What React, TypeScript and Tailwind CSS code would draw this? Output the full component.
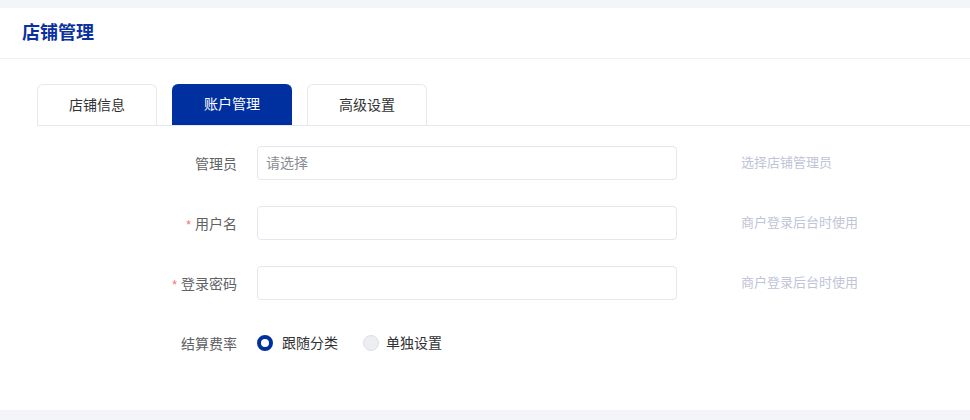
import React from 'react';

const font = { fontFamily: '"Liberation Sans", "Noto Sans CJK SC", sans-serif' };

function Row({ label, required, children, hint }: { label: string; required?: boolean; children: React.ReactNode; hint?: string }) {
  return (
    <div className="flex items-center h-[34px] mb-[26px]">
      <div className="w-[200px] text-right text-[14px] text-[#606266] pt-[3px]">
        {required && <span className="text-[#f56c6c] mr-1 text-[12px]">*</span>}
        {label}
      </div>
      <div className="ml-[20px] w-[420px]">{children}</div>
      {hint && <div className="ml-[64px] text-[13px] text-[#c0c4d6]">{hint}</div>}
    </div>
  );
}

export default function App() {
  return (
    <div className="w-[970px] h-[420px] bg-[#f4f5f9] pt-2" style={font}>
      <div className="bg-white h-[402px]">
        {/* header */}
        <div className="h-[51px] border-b border-[#eef0f4] flex items-center pl-[22px]">
          <h1 className="text-[18px] font-bold text-[#0a2fa0] mt-[1px]">店铺管理</h1>
        </div>

        {/* tabs */}
        <div className="pl-[37px] pt-[25px]">
          <div className="flex gap-[15px] border-b border-[#e6e8ee] h-[42px]">
            {['店铺信息', '账户管理', '高级设置'].map((t, i) => (
              <div
                key={t}
                className={
                  i === 1
                    ? 'w-[120px] h-[41px] rounded-t-md bg-[#0030a0] text-white text-[14px] flex items-center justify-center'
                    : 'w-[120px] h-[41px] rounded-t-md border border-b-0 border-[#e6e8ee] text-[#303133] text-[14px] flex items-center justify-center'
                }
              >
                {t}
              </div>
            ))}
          </div>

          {/* form */}
          <div className="pt-[20px]">
            <Row label="管理员" hint="选择店铺管理员">
              <div className="h-[34px] border border-[#e4e7ed] rounded flex items-center px-[8px] text-[14px] text-[#8a8d93]">请选择</div>
            </Row>
            <Row label="用户名" required hint="商户登录后台时使用">
              <div className="h-[34px] border border-[#e4e7ed] rounded" />
            </Row>
            <Row label="登录密码" required hint="商户登录后台时使用">
              <div className="h-[34px] border border-[#e4e7ed] rounded" />
            </Row>
            <Row label="结算费率">
              <div className="flex items-center text-[14px] text-[#303133]">
                <span className="w-4 h-4 rounded-full border-[4.5px] border-[#0030a0] bg-white" />
                <span className="ml-[9px]">跟随分类</span>
                <span className="ml-[25px] w-4 h-4 rounded-full border border-[#dcdfe6] bg-[#edeef1]" />
                <span className="ml-[7px]">单独设置</span>
              </div>
            </Row>
          </div>
        </div>
      </div>
    </div>
  );
}
